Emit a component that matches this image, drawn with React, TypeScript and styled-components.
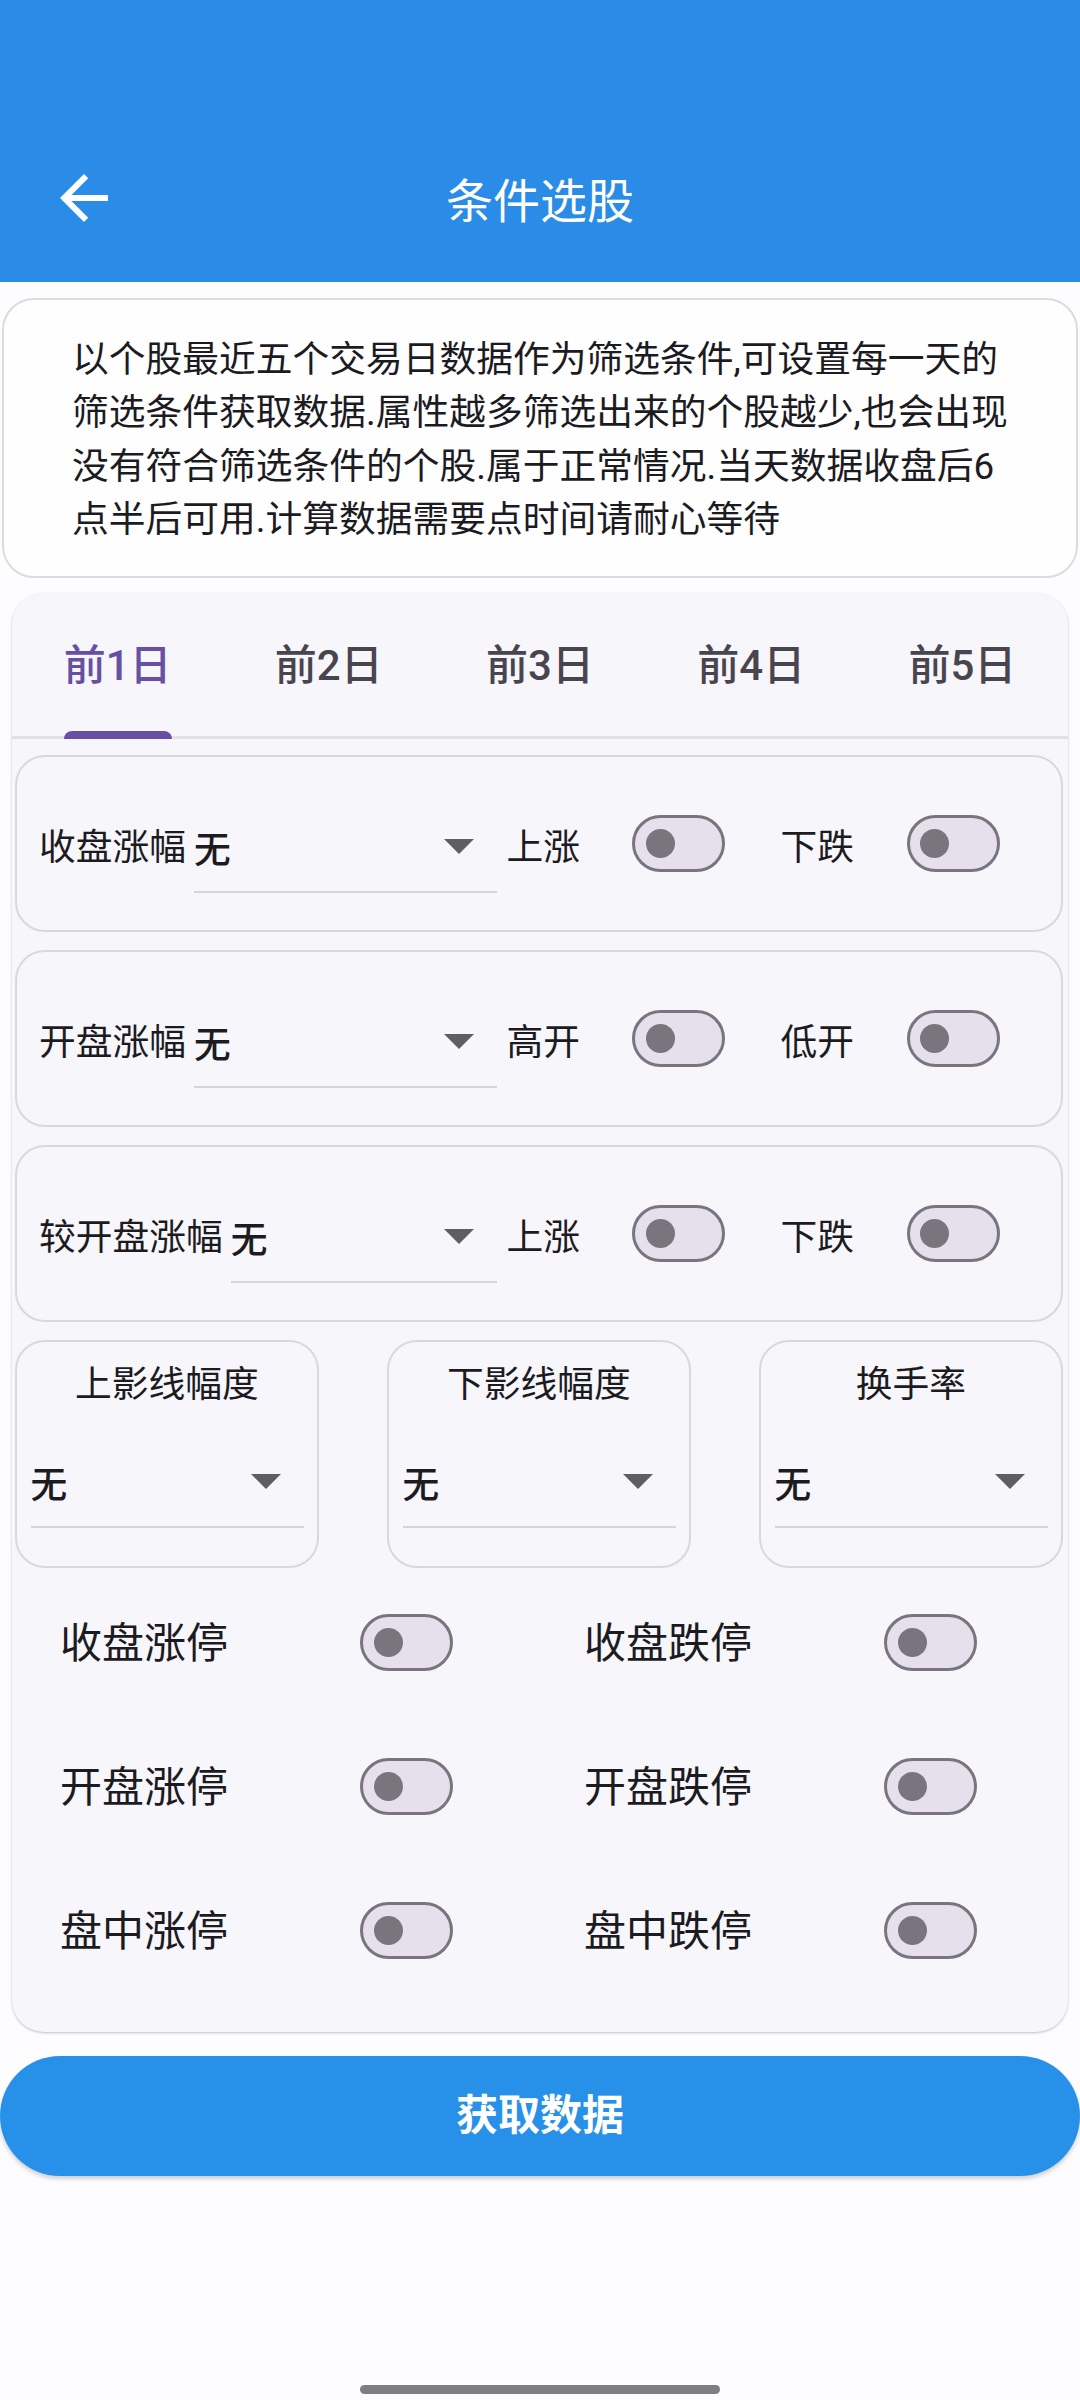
import React from 'react';
import styled, { createGlobalStyle } from 'styled-components';

const GlobalStyle = createGlobalStyle`
  html, body {
    margin: 0;
    padding: 0;
    background: #fdfcff;
  }
  body {
    font-family: Roboto, "Noto Sans CJK SC", sans-serif;
    color: #1c1b1f;
  }
  * { box-sizing: border-box; }
`;

const Screen = styled.div`
  width: 1080px;
  min-height: 2400px;
  display: flex;
  flex-direction: column;
  background: #fdfcff;
`;

const Header = styled.header`
  height: 282px;
  padding-top: 114px;
  background: #2a8ce6;
`;

const Toolbar = styled.div`
  height: 168px;
  display: flex;
  align-items: center;
  padding-left: 48px;
`;

const BackIcon = styled.svg`
  width: 72px;
  height: 72px;
  flex-shrink: 0;
  fill: #ffffff;
`;

const Title = styled.h1`
  flex: 1;
  margin: 0 120px 0 0;
  padding-top: 7px;
  text-align: center;
  font-size: 47px;
  font-weight: 400;
  line-height: 68px;
  color: #ffffff;
`;

const InfoCard = styled.div`
  margin: 16px 2px 0;
  border: 2px solid #dcdcdf;
  border-radius: 32px;
  background: #fefeff;
  padding: 33px 20px 30px 68px;
  font-size: 36.75px;
  line-height: 53.3px;
  color: #1c1b1f;
`;

const InfoLine = styled.span`
  display: block;
  white-space: nowrap;
`;

const MainCard = styled.section`
  margin: 15px 12px 0;
  background: #f7f6fa;
  border-radius: 32px;
  box-shadow: 0 1px 3px rgba(0, 0, 0, 0.2), 0 1px 1px rgba(0, 0, 0, 0.05);
  padding-bottom: 30px;
`;

const TabBar = styled.div`
  display: flex;
  height: 146px;
  border-bottom: 3px solid #e3e0e7;
`;

const Tab = styled.div`
  flex: 1;
  display: flex;
  justify-content: center;
`;

const TabInner = styled.div`
  display: flex;
  flex-direction: column;
  height: 143px;
`;

const TabText = styled.div<{ $active: boolean }>`
  flex: 1;
  display: flex;
  align-items: center;
  padding-top: 7px;
  font-size: 42px;
  font-weight: 500;
  line-height: 58px;
  color: ${(p) => (p.$active ? '#6750a4' : '#49454f')};
  white-space: nowrap;
`;

const TabIndicator = styled.div<{ $active: boolean }>`
  height: 8px;
  margin-bottom: -3px;
  border-radius: 8px 8px 0 0;
  background: ${(p) => (p.$active ? '#6750a4' : 'transparent')};
`;

const Content = styled.div`
  padding: 16px 5px 0 3px;
`;

const FilterBox = styled.div`
  height: 177px;
  border: 2.5px solid #d9d8dc;
  border-radius: 30px;
  display: flex;
  align-items: center;
  padding: 0 61.5px 0 22px;
  margin-bottom: 18px;
`;

const Label = styled.span`
  padding-top: 7px;
  font-size: 36.75px;
  line-height: 53px;
  white-space: nowrap;
  flex-shrink: 0;
`;

const Select = styled.div`
  height: 98px;
  padding-top: 8px;
  border-bottom: 2px solid #d6d5d9;
  display: flex;
  align-items: center;
  justify-content: space-between;
`;

const InlineSelect = styled(Select)`
  flex: 1;
  margin: 0 9px 0 8px;
`;

const BlockSelect = styled(Select)`
  margin-top: 18.5px;
`;

const SelectValue = styled.span`
  padding-top: 7px;
  font-size: 36.75px;
  font-weight: 500;
  line-height: 53px;
  color: #1c1b1f;
`;

const Caret = styled.span`
  width: 0;
  height: 0;
  margin-right: 23px;
  border-left: 15px solid transparent;
  border-right: 15px solid transparent;
  border-top: 15px solid #5f5f62;
`;

const SwitchTrack = styled.span<{ $gap: number }>`
  width: 93px;
  height: 57px;
  margin-left: ${(p) => p.$gap}px;
  flex-shrink: 0;
  display: flex;
  align-items: center;
  padding-left: 10.5px;
  border: 3.5px solid #79747e;
  border-radius: 29px;
  background: #e6e0ec;
`;

const SwitchThumb = styled.span`
  width: 29px;
  height: 29px;
  border-radius: 50%;
  background: #79747e;
`;

const ToggleLabel = styled(Label)<{ $gap: number }>`
  margin-left: ${(p) => p.$gap}px;
`;

const ThreeRow = styled.div`
  display: flex;
  justify-content: space-between;
  margin-bottom: 2px;
`;

const SmallBox = styled.div`
  width: 304px;
  height: 228px;
  border: 2.5px solid #d9d8dc;
  border-radius: 30px;
  padding: 12px 13.5px 0;
  display: flex;
  flex-direction: column;
`;

const SmallTitle = styled.div`
  padding-top: 4px;
  text-align: center;
  font-size: 36.75px;
  line-height: 53px;
`;

const ToggleGrid = styled.div`
  display: grid;
  grid-template-columns: 1fr 1fr;
  grid-auto-rows: 144px;
`;

const ToggleCell = styled.div`
  display: flex;
  align-items: center;
  padding-left: 45px;
`;

const CellLabel = styled.span`
  width: 300px;
  flex-shrink: 0;
  padding-top: 4px;
  font-size: 42px;
  line-height: 58px;
`;

const SubmitButton = styled.button`
  margin-top: 24px;
  width: 1080px;
  height: 120px;
  border: none;
  border-radius: 60px;
  background: #2791e9;
  color: #ffffff;
  font-family: Roboto, "Noto Sans CJK SC", sans-serif;
  font-size: 42px;
  font-weight: 700;
  line-height: 58px;
  box-shadow: 0 3px 4px rgba(0, 0, 0, 0.18);
`;

const NavArea = styled.div`
  margin-top: auto;
  height: 30px;
  padding-top: 15px;
  display: flex;
  justify-content: center;
`;

const HomeIndicator = styled.div`
  width: 360px;
  height: 9px;
  border-radius: 5px;
  background: #7f7e83;
`;

const Switch: React.FC<{ gap?: number }> = ({ gap = 0 }) => (
  <SwitchTrack $gap={gap}>
    <SwitchThumb />
  </SwitchTrack>
);

const SelectField: React.FC<{ block?: boolean }> = ({ block }) => {
  const Wrap = block ? BlockSelect : InlineSelect;
  return (
    <Wrap>
      <SelectValue>无</SelectValue>
      <Caret />
    </Wrap>
  );
};

const rows = [
  { label: '收盘涨幅', up: '上涨', down: '下跌' },
  { label: '开盘涨幅', up: '高开', down: '低开' },
  { label: '较开盘涨幅', up: '上涨', down: '下跌' },
];

const smallBoxes = ['上影线幅度', '下影线幅度', '换手率'];

const toggles = ['收盘涨停', '收盘跌停', '开盘涨停', '开盘跌停', '盘中涨停', '盘中跌停'];

const tabs = ['前1日', '前2日', '前3日', '前4日', '前5日'];

const infoLines = [
  '以个股最近五个交易日数据作为筛选条件,可设置每一天的',
  '筛选条件获取数据.属性越多筛选出来的个股越少,也会出现',
  '没有符合筛选条件的个股.属于正常情况.当天数据收盘后6',
  '点半后可用.计算数据需要点时间请耐心等待',
];

export default function App() {
  return (
    <>
      <GlobalStyle />
      <Screen>
        <Header>
          <Toolbar>
            <BackIcon viewBox="0 0 24 24">
              <path d="M20 11H7.83l5.59-5.59L12 4l-8 8 8 8 1.41-1.41L7.83 13H20v-2z" />
            </BackIcon>
            <Title>条件选股</Title>
          </Toolbar>
        </Header>

        <InfoCard>
          {infoLines.map((l) => (
            <InfoLine key={l}>{l}</InfoLine>
          ))}
        </InfoCard>

        <MainCard>
          <TabBar>
            {tabs.map((t, i) => (
              <Tab key={t}>
                <TabInner>
                  <TabText $active={i === 0}>{t}</TabText>
                  <TabIndicator $active={i === 0} />
                </TabInner>
              </Tab>
            ))}
          </TabBar>

          <Content>
            {rows.map((r) => (
              <FilterBox key={r.label}>
                <Label>{r.label}</Label>
                <SelectField />
                <Label>{r.up}</Label>
                <Switch gap={52.5} />
                <ToggleLabel $gap={55}>{r.down}</ToggleLabel>
                <Switch gap={52.5} />
              </FilterBox>
            ))}

            <ThreeRow>
              {smallBoxes.map((b) => (
                <SmallBox key={b}>
                  <SmallTitle>{b}</SmallTitle>
                  <SelectField block />
                </SmallBox>
              ))}
            </ThreeRow>

            <ToggleGrid>
              {toggles.map((t) => (
                <ToggleCell key={t}>
                  <CellLabel>{t}</CellLabel>
                  <Switch />
                </ToggleCell>
              ))}
            </ToggleGrid>
          </Content>
        </MainCard>

        <SubmitButton type="button">获取数据</SubmitButton>

        <NavArea>
          <HomeIndicator />
        </NavArea>
      </Screen>
    </>
  );
}
